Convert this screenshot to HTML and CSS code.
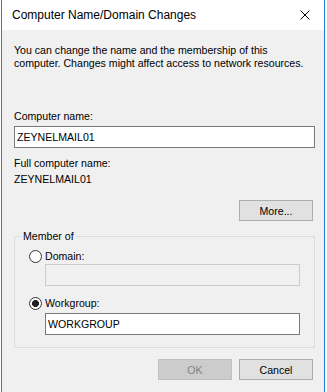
FILE: index.html
```html
<!DOCTYPE html>
<html lang="en">
<head>
  <meta charset="UTF-8" />
  <meta name="viewport" content="width=device-width, initial-scale=1.0" />
  <title>Computer Name/Domain Changes</title>
  <link rel="stylesheet" href="styles.css">
</head>
<body>

  <div class="window">
    <div class="titlebar">
      <span class="title">Computer Name/Domain Changes</span>
      <svg class="close" width="10" height="10" viewBox="0 0 10 10">
        <path d="M0.5 0.5 L9.5 9.5 M9.5 0.5 L0.5 9.5" stroke="#000" stroke-width="1" fill="none" />
      </svg>
    </div>

    <div class="content">
      <p class="intro">You can change the name and the membership of this<br>computer. Changes might affect access to network resources.</p>

      <label class="field-label" for="computerName">Computer name:</label>
      <input type="text" id="computerName" class="textbox" value="ZEYNELMAIL01">

      <div class="field-label full-label">Full computer name:</div>
      <div class="full-name">ZEYNELMAIL01</div>

      <div class="more-row">
        <button class="btn">More...</button>
      </div>

      <fieldset class="member-of">
        <legend>Member of</legend>
        <label class="radio-row">
          <input type="radio" name="member">
          <span>Domain:</span>
        </label>
        <input type="text" class="textbox indent" disabled>
        <label class="radio-row workgroup">
          <input type="radio" name="member" checked>
          <span>Workgroup:</span>
        </label>
        <input type="text" class="textbox indent" value="WORKGROUP">
      </fieldset>

      <div class="actions">
        <button class="btn" disabled>OK</button>
        <button class="btn">Cancel</button>
      </div>
    </div>
  </div>

</body>
</html>
```

FILE: styles.css
```css
body {
  margin: 0;
  background: #fff;
  font-family: "Liberation Sans", Arial, sans-serif;
  font-size: 10.6px;
  line-height: 13px;
  color: #000;
}

.window {
  margin-left: 1px;
  width: 322px;
  border: 1px solid #1883d7;
  border-top: none;
  background: #f0f0f0;
}

/* Title bar */
.titlebar {
  height: 30px;
  background: #fff;
  display: flex;
  align-items: center;
  justify-content: space-between;
  padding: 0 14px 0 10px;
}

.title {
  font-size: 12px;
  line-height: 16px;
}

.close {
  display: block;
}

/* Dialog body */
.content {
  padding: 14px 9px 12px 12px;
}

.intro {
  margin: 0;
  white-space: nowrap;
}

.field-label {
  display: block;
  margin-top: 40px;
}

.full-label {
  margin-top: 9px;
}

.full-name {
  margin-top: 3px;
}

.textbox {
  display: block;
  box-sizing: border-box;
  width: 301px;
  height: 22px;
  margin: 3px 0 0;
  padding: 0 2px;
  border: 1px solid #7a7a7a;
  background: #fff;
  font-family: inherit;
  font-size: 10.6px;
  color: #000;
  outline: none;
}

.textbox:disabled {
  background: #f0f0f0;
  border-color: #cccccc;
}

.btn {
  box-sizing: border-box;
  width: 74px;
  height: 21px;
  padding: 0;
  border: 1px solid #adadad;
  background: #e1e1e1;
  font-family: inherit;
  font-size: 10.6px;
  color: #000;
}

.btn:disabled {
  background: #cccccc;
  border-color: #bfbfbf;
  color: #838383;
}

.more-row {
  display: flex;
  justify-content: flex-end;
  margin-top: 14px;
  padding-right: 2px;
}

/* Member of group */
.member-of {
  margin: 9px 0 0;
  width: 301px;
  box-sizing: border-box;
  padding: 7px 14px 12px 14px;
  border: 1px solid #dcdcdc;
}

.member-of legend {
  padding: 0 2px;
  margin-left: -8px;
}

.radio-row {
  display: flex;
  align-items: center;
  height: 13px;
}

.radio-row.workgroup {
  margin-top: 11px;
}

.radio-row input {
  appearance: none;
  -webkit-appearance: none;
  width: 13px;
  height: 13px;
  margin: 0 3px 0 0;
  border: 1px solid #333;
  border-radius: 50%;
  background: #fff;
}

.radio-row input:checked {
  background: radial-gradient(circle, #222 0, #222 3.2px, #fff 3.8px);
}

.textbox.indent {
  width: 255px;
  margin-left: 16px;
  margin-top: 1px;
}

.workgroup + .textbox.indent {
  margin-top: 3px;
}

.actions {
  display: flex;
  justify-content: flex-end;
  gap: 7px;
  margin-top: 11px;
  padding-right: 2px;
}
```
